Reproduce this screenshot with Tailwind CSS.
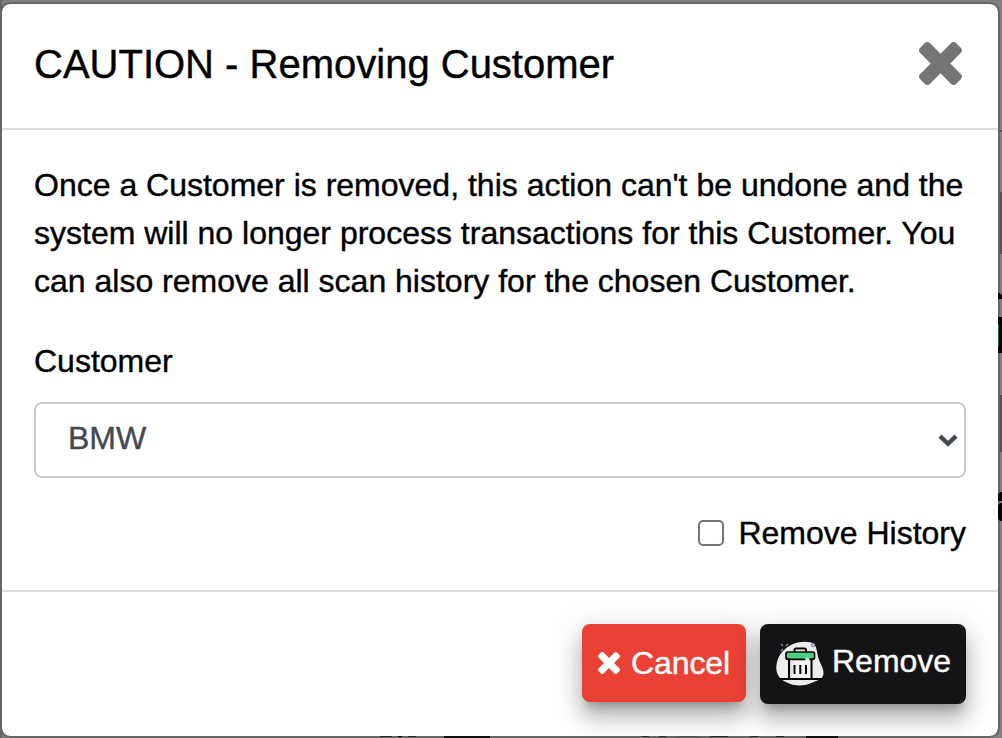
<!DOCTYPE html>
<html lang="en">
<head>
<meta charset="utf-8">
<title>Remove Customer</title>
<script src="https://cdn.jsdelivr.net/npm/@tailwindcss/browser@4"></script>
</head>
<body class="relative h-[738px] w-[1002px] overflow-hidden bg-[#808080] font-['Liberation_Sans',Arial,sans-serif] text-black [-webkit-text-stroke:0.4px]">
  <!-- page behind the dialog -->
  <div class="absolute inset-0">
    <div class="absolute left-0 top-0 h-full w-[2px] bg-[#666]"></div>
    <div class="absolute left-0 top-[481px] h-[7px] w-[2px] bg-black"></div>
    <div class="absolute left-0 top-[496px] h-[8px] w-[2px] bg-black"></div>
    <div class="absolute left-0 top-[514px] h-[7px] w-[2px] bg-black"></div>
    <div class="absolute left-0 top-[607px] h-[2px] w-[2px] bg-black"></div>
    <div class="absolute right-0 top-[130px] h-[2px] w-[4px] bg-[#555]"></div>
    <div class="absolute right-0 top-[192px] h-[62px] w-[4px] bg-[#525252]"></div>
    <div class="absolute right-0 top-[395px] h-[57px] w-[4px] bg-[#525252]"></div>
  </div>
  <main class="relative mt-[2px] flex h-[736px] w-[1000px] flex-col rounded-[10px] border-2 border-[#666] bg-white bg-clip-padding">
    <header class="flex h-[126px] items-start justify-between border-b-2 border-[#d9dde2] pl-8 pr-9 pt-[30px]">
      <h1 class="whitespace-nowrap text-[40px] leading-[60px]">CAUTION - Removing Customer</h1>
      <button class="mt-[8px]" aria-label="Close">
        <svg class="block h-[43px] w-[43px]" viewBox="110 366 1188 1188" fill="#757575"><path d="M1298 1322q0 40-28 68l-136 136q-28 28-68 28t-68-28L704 1232l-294 294q-28 28-68 28t-68-28L138 1390q-28-28-28-68t28-68l294-294-294-294q-28-28-28-68t28-68l136-136q28-28 68-28t68 28l294 294 294-294q28-28 68-28t68 28l136 136q28 28 28 68t-28 68L976 960l294 294q28 28 28 68z"/></svg>
      </button>
    </header>
    <section class="h-[462px] border-b-2 border-[#d9dde2] px-8 pt-[31px] text-[32px] leading-[48px]">
      <p class="whitespace-nowrap">Once a Customer is removed, this action can't be undone and the<br>system will no longer process transactions for this Customer. You<br>can also remove all scan history for the chosen Customer.</p>
      <div class="mt-8">Customer</div>
      <div class="mt-[17px] flex h-[76px] items-center justify-between rounded-lg border-2 border-[#c8cdd4] pl-8 pr-[6px] text-[#444a51]">
        <span class="-mt-[4px]">BMW</span>
        <svg class="h-[13px] w-[20px]" viewBox="0 0 20 13" fill="none" stroke="#444a51" stroke-width="4.4"><path d="M2 2.2 10 9.8l8-7.6"/></svg>
      </div>
      <div class="mt-[31px] flex items-center justify-end whitespace-nowrap">
        <span class="mr-[14px] h-[26px] w-[26px] rounded-[5px] border-2 border-[#767676]"></span>
        <span>Remove History</span>
      </div>
    </section>
    <footer class="flex flex-1 items-start justify-end gap-[14px] pr-8 pt-8 text-[32px] leading-[48px] text-white">
      <button class="flex h-[78px] w-[164px] items-center rounded-lg bg-[#e94235] pl-4 shadow-[0_10px_10px_-6px_rgba(0,0,0,0.24),0_16px_20px_2px_rgba(0,0,0,0.18),0_6px_28px_4px_rgba(0,0,0,0.13)]">
        <svg class="mr-[11px] h-[22px] w-[22px] shrink-0" viewBox="110 366 1188 1188" fill="#fff"><path d="M1298 1322q0 40-28 68l-136 136q-28 28-68 28t-68-28L704 1232l-294 294q-28 28-68 28t-68-28L138 1390q-28-28-28-68t28-68l294-294-294-294q-28-28-28-68t28-68l136-136q28-28 68-28t68 28l294 294 294-294q28-28 68-28t68 28l136 136q28 28 28 68t-28 68L976 960l294 294q28 28 28 68z"/></svg>
        <span class="-tracking-[0.1px]">Cancel</span>
      </button>
      <button class="flex h-[80px] w-[206px] items-center rounded-lg bg-[#141416] pl-4 shadow-[0_10px_10px_-6px_rgba(0,0,0,0.24),0_16px_20px_2px_rgba(0,0,0,0.18),0_6px_28px_4px_rgba(0,0,0,0.13)]">
        <svg class="mr-[8px] h-[48px] w-[48px] shrink-0" viewBox="0 0 48 48">
          <path d="M17 4C24 1 34 1 38 4c3 3 3 10 5 16 2 5 5 9 4.500 14-1 6-6 6-11 8.500-6 3-15 4-22 1.500C6 41 1 37 .3 29 0 18 6 9 17 4Z" fill="#ededed"/>
          <g transform="translate(0 1)">
            <path d="M13 19h22.500v19h-22.500z" fill="#f4f4f4"/><path d="M13 20h3.500v18h-3.500z" fill="#d9dbe5"/>
            <path d="M10.500 11.500h27v6.500h-27z" fill="#4fd080"/>
            <g fill="none" stroke="#000" stroke-linejoin="round" stroke-linecap="round"><path stroke-width="2" d="M13 18v20M35.500 18v20M3 38h43M18.500 10.500V9q0-1.500 1.500-1.500h8.500q1.500 0 1.500 1.500v1.500"/><path stroke-width="1.700" d="M12 18.300q-2 0-2-2v-3.300q0-2 2-2h24.500q2 0 2 2v3.300q0 2-2 2H34M12 18.300h17"/><path stroke-width="2" d="M18.500 24v9M24.300 24v9M30 24v9" stroke-linecap="butt"/></g>
            <path d="M31 16v4M29 18h4" stroke="#c9f3da" stroke-width="1"/>
          </g>
          <g fill="none" stroke="#7d879f" stroke-width="1.300"><path d="m5 4 2 2m5-2-2 2M5 11l2-2"/><circle cx="37" cy="5" r="1.500"/></g>
        </svg>
        <span class="-mt-[6px]">Remove</span>
      </button>
    </footer>
  </main>
  <!-- page fragments visible along the dialog's edges -->
  <div class="absolute right-0 top-[293px] h-[6px] w-[4px] rounded-tr bg-black"></div>
  <div class="absolute right-0 top-[317px] h-[36px] w-[4px] bg-black"></div>
  <div class="absolute right-[3px] top-[324px] h-[22px] w-px bg-[#24683c]"></div>
  <div class="absolute right-0 top-[492px] h-[9px] w-[4px] rounded-tl bg-black"></div>
  <div class="absolute right-0 top-[503px] h-[18px] w-[4px] rounded-l bg-black"></div>
  <div class="absolute left-[444px] top-[736px] h-[2px] w-[46px] bg-[#111]"></div>
  <div class="absolute left-[806px] top-[736px] h-[2px] w-[32px] bg-[#111]"></div>
  <div class="absolute left-[380px] top-[736px] flex h-px gap-[6px]"><i class="w-[12px] bg-black/60"></i><i class="w-[4px] bg-black"></i><i class="w-[8px] bg-black/60"></i></div>
  <div class="absolute left-[642px] top-[736px] flex h-px gap-[10px]"><i class="w-[7px] bg-black/60"></i><i class="w-[7px] bg-black/60"></i><i class="w-[24px] bg-black/20"></i><i class="w-[18px] bg-black/60"></i><i class="ml-3 w-[8px] bg-black/60"></i><i class="ml-2 w-[8px] bg-black/60"></i></div>
</body>
</html>
